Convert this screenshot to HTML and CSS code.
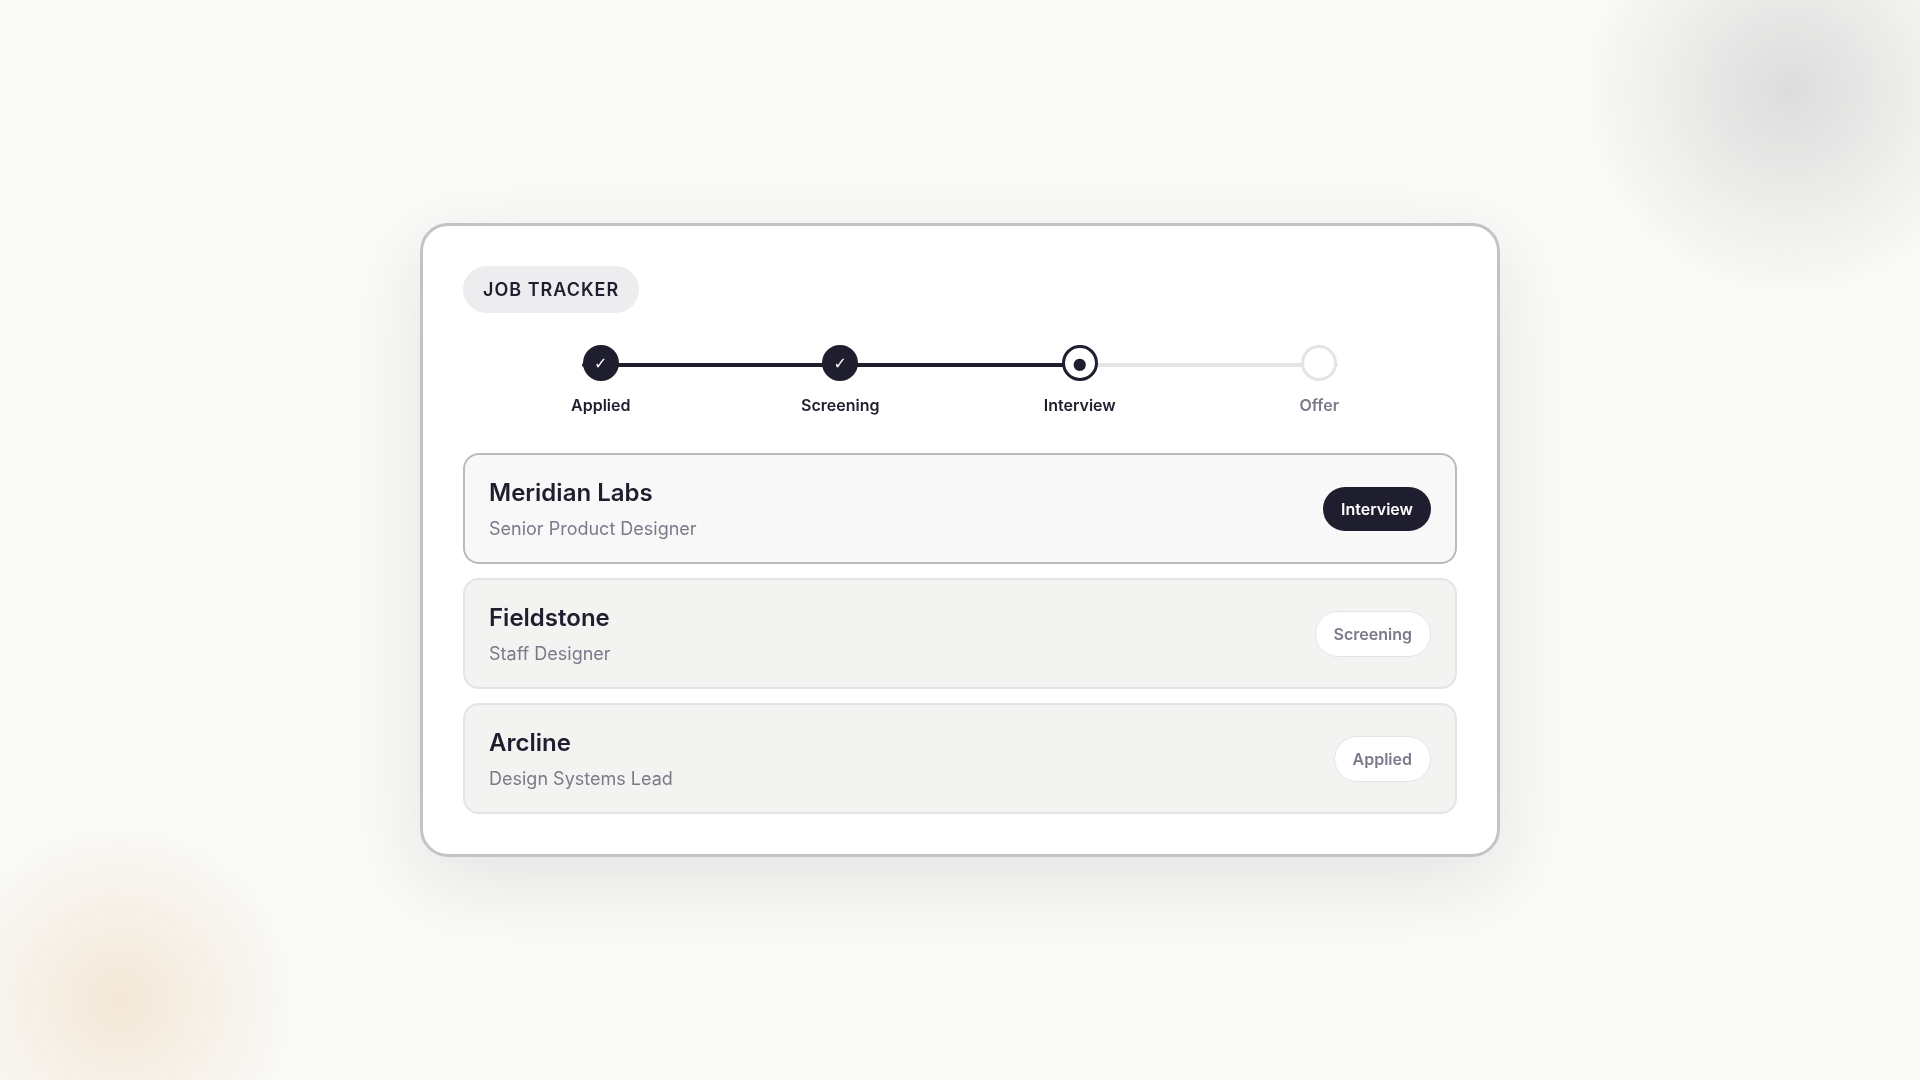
FILE: index.html
```
<!DOCTYPE html>
<html lang="en">

<head>
    <meta charset="utf-8" />
    <meta name="viewport" content="width=device-width, initial-scale=1" />
    <title>Job Tracker</title>
    <link rel="stylesheet" href="styles.css">
</head>

<body>
    <div class="backdrop">
        <div class="glow glow-top"></div>
        <div class="glow glow-bottom"></div>
    </div>

    <main class="card">
        <h1 class="tag">JOB TRACKER</h1>

        <ol class="steps">
            <li class="step done"><span class="dot">✓</span>Applied</li>
            <li class="step done"><span class="dot">✓</span>Screening</li>
            <li class="step current"><span class="dot">●</span>Interview</li>
            <li class="step"><span class="dot"></span>Offer</li>
        </ol>

        <ul class="jobs">
            <li class="job active">
                <div>
                    <h2>Meridian Labs</h2>
                    <p>Senior Product Designer</p>
                </div>
                <span class="status">Interview</span>
            </li>
            <li class="job">
                <div>
                    <h2>Fieldstone</h2>
                    <p>Staff Designer</p>
                </div>
                <span class="status">Screening</span>
            </li>
            <li class="job">
                <div>
                    <h2>Arcline</h2>
                    <p>Design Systems Lead</p>
                </div>
                <span class="status">Applied</span>
            </li>
        </ul>
    </main>
</body>

</html>
```
FILE: styles.css
```
:root {
    --bg: #fafaf8;
    --ink: #1e1e2e;
    --muted: #7a7a8a;
    --line: #e4e4e4;
    --edge: #c3c3c4;
    --row: #f3f3f1;
}

* {
    box-sizing: border-box;
}

body {
    margin: 0;
    display: flex;
    align-items: center;
    justify-content: center;
    min-height: 100vh;
    font-family: Inter, "Liberation Sans", sans-serif;
    font-size: 16px;
    line-height: 1.5;
    background: var(--bg);
    color: var(--ink);
}

h1,
h2,
p,
ol,
ul {
    margin: 0;
    padding: 0;
    list-style: none;
}

/* Soft colour spots behind the card */
.backdrop {
    position: fixed;
    inset: 0;
    overflow: hidden;
}

.glow {
    position: absolute;
    border-radius: 50%;
}

.glow-top {
    top: -120px;
    right: -80px;
    width: 420px;
    height: 420px;
    background: radial-gradient(circle, #dcdcdc, rgba(220, 220, 220, 0) 70%);
}

.glow-bottom {
    bottom: -100px;
    left: -60px;
    width: 360px;
    height: 360px;
    background: radial-gradient(circle, #f3e7d6, rgba(243, 231, 214, 0) 70%);
}

.card {
    position: relative;
    width: 100%;
    max-width: 1080px;
    padding: 40px;
    background: #fff;
    border: 3px solid var(--edge);
    border-radius: 28px;
    box-shadow: 0 24px 80px rgba(30, 30, 46, 0.1);
}

.tag {
    width: fit-content;
    padding: 10px 20px;
    font-size: 18px;
    font-weight: 600;
    letter-spacing: 1px;
    background: #ededf0;
    border-radius: 24px;
}

/* Progress */
.steps {
    display: flex;
    position: relative;
    margin: 32px 0 36px;
    padding: 0 18px;
}

.steps::before {
    content: "";
    position: absolute;
    top: 18px;
    left: 12%;
    right: 12%;
    height: 4px;
    border-radius: 2px;
    background: linear-gradient(90deg, var(--ink) 66%, var(--line) 66%);
}

.step {
    flex: 1;
    display: flex;
    flex-direction: column;
    align-items: center;
    gap: 12px;
    position: relative;
    font-weight: 600;
    color: var(--muted);
}

.dot {
    display: flex;
    align-items: center;
    justify-content: center;
    width: 36px;
    height: 36px;
    padding-top: 2px;
    font-family: "DejaVu Sans", sans-serif;
    font-weight: 400;
    background: #fff;
    border: 3px solid var(--line);
    border-radius: 50%;
}

.done,
.current {
    color: var(--ink);
}

.done .dot {
    color: #fff;
    background: var(--ink);
    border-color: var(--ink);
}

.current .dot {
    border-color: var(--ink);
}

/* Applications */
.jobs {
    display: flex;
    flex-direction: column;
    gap: 14px;
}

.job {
    display: flex;
    align-items: center;
    justify-content: space-between;
    padding: 20px 24px;
    background: var(--row);
    border: 2px solid var(--line);
    border-radius: 16px;
}

.job h2 {
    margin-bottom: 4px;
    font-size: 24px;
    font-weight: 600;
}

.job p {
    font-size: 18px;
    color: var(--muted);
}

.status {
    padding: 10px 18px;
    font-weight: 600;
    color: var(--muted);
    background: #fff;
    border: 1px solid var(--line);
    border-radius: 24px;
}

.active {
    background: #f8f8f9;
    border-color: #bbbbbd;
}

.active .status {
    color: #fff;
    background: var(--ink);
    border: none;
}
```
